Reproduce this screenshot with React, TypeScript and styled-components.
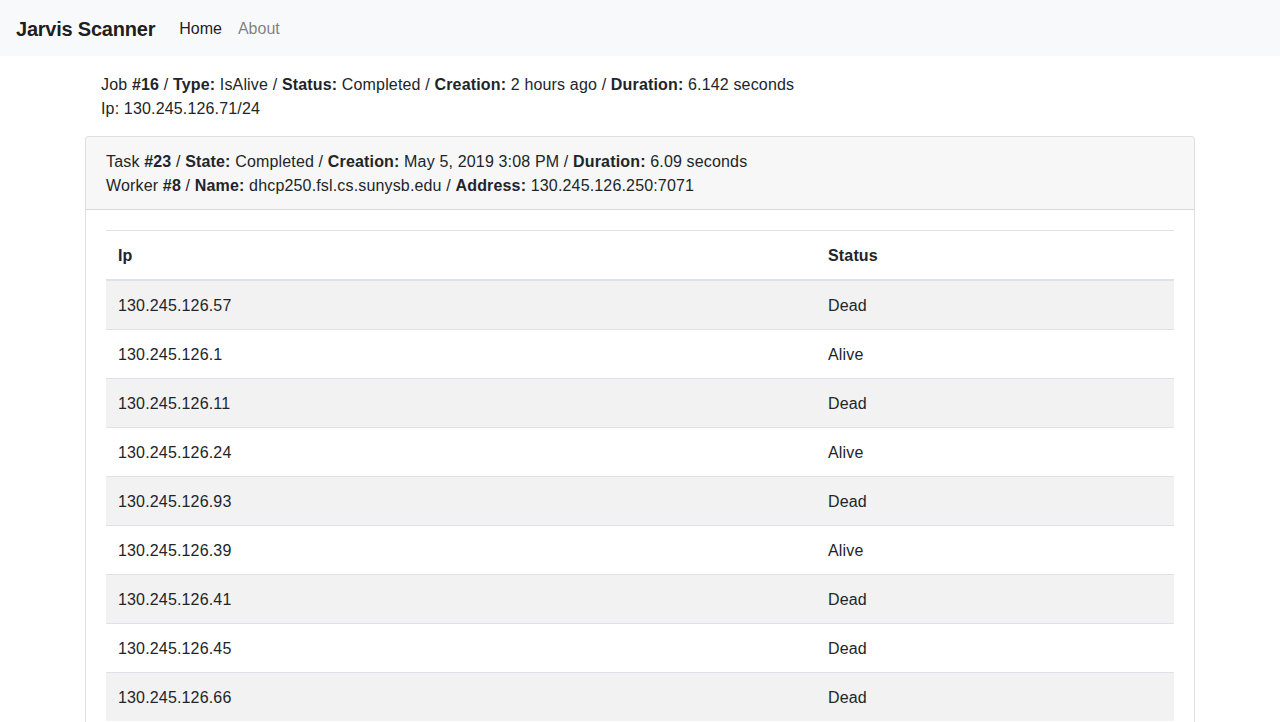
import React from "react";
import styled, { createGlobalStyle } from "styled-components";

const Global = createGlobalStyle`
  html, body { margin: 0; padding: 0; background: #fff; }
  body {
    font-family: "Liberation Sans", Arial, Helvetica, sans-serif;
    font-size: 16px;
    line-height: 1.5;
    color: #212529;
    letter-spacing: 0.16px;
  }
  * { box-sizing: border-box; }
`;

const Navbar = styled.nav`
  height: 56px;
  background: #f8f9fa;
  display: flex;
  align-items: center;
  padding: 9px 16px 7px;
`;

const Brand = styled.a`
  font-size: 20px;
  line-height: 30px;
  font-weight: 700;
  color: rgba(0, 0, 0, 0.9);
  margin-right: 16px;
  text-decoration: none;
  letter-spacing: -0.22px;
`;

const NavLink = styled.a<{ $active?: boolean }>`
  padding: 8px;
  color: ${(p) => (p.$active ? "rgba(0,0,0,0.9)" : "rgba(0,0,0,0.5)")};
  text-decoration: none;
  letter-spacing: 0;
`;

const Container = styled.div`
  max-width: 1140px;
  margin: 0 auto;
  padding: 0 15px;
`;

const JobInfo = styled.div`
  padding: 17px 16px 15px;
`;

const Line = styled.div``;

const Card = styled.div`
  border: 1px solid rgba(0, 0, 0, 0.125);
  border-radius: 4px;
  background: #fff;
`;

const CardHeader = styled.div`
  padding: 13px 20px 11px;
  background: rgba(0, 0, 0, 0.03);
  border-bottom: 1px solid rgba(0, 0, 0, 0.125);
  border-radius: 3px 3px 0 0;
`;

const CardBody = styled.div`
  padding: 20px;
`;

const Table = styled.table`
  width: 100%;
  border-collapse: collapse;
  color: #212529;
`;

const Th = styled.th<{ $w?: string }>`
  text-align: left;
  font-weight: 700;
  padding: 13px 12px 11px;
  border-top: 1px solid #dee2e6;
  border-bottom: 2px solid #dee2e6;
  width: ${(p) => p.$w || "auto"};
`;

const Tr = styled.tr<{ $striped: boolean }>`
  background: ${(p) => (p.$striped ? "rgba(0,0,0,0.05)" : "transparent")};
`;

const Td = styled.td`
  padding: 13px 12px 11px;
  border-top: 1px solid #dee2e6;
`;

const rows: [string, string][] = [
  ["130.245.126.57", "Dead"],
  ["130.245.126.1", "Alive"],
  ["130.245.126.11", "Dead"],
  ["130.245.126.24", "Alive"],
  ["130.245.126.93", "Dead"],
  ["130.245.126.39", "Alive"],
  ["130.245.126.41", "Dead"],
  ["130.245.126.45", "Dead"],
  ["130.245.126.66", "Dead"],
];

export default function App() {
  return (
    <>
      <Global />
      <Navbar>
        <Brand href="#">Jarvis Scanner</Brand>
        <NavLink $active href="#">Home</NavLink>
        <NavLink href="#">About</NavLink>
      </Navbar>
      <Container>
        <JobInfo>
          <Line>
            Job <b>#16</b> / <b>Type:</b> IsAlive / <b>Status:</b> Completed / <b>Creation:</b> 2 hours ago /{" "}
            <b>Duration:</b> 6.142 seconds
          </Line>
          <Line>Ip: 130.245.126.71/24</Line>
        </JobInfo>
        <Card>
          <CardHeader>
            <Line>
              Task <b>#23</b> / <b>State:</b> Completed / <b>Creation:</b> May 5, 2019 3:08 PM / <b>Duration:</b> 6.09
              seconds
            </Line>
            <Line>
              Worker <b>#8</b> / <b>Name:</b> dhcp250.fsl.cs.sunysb.edu / <b>Address:</b> 130.245.126.250:7071
            </Line>
          </CardHeader>
          <CardBody>
            <Table>
              <thead>
                <tr>
                  <Th $w="710px">Ip</Th>
                  <Th>Status</Th>
                </tr>
              </thead>
              <tbody>
                {rows.map(([ip, st], i) => (
                  <Tr key={ip} $striped={i % 2 === 0}>
                    <Td>{ip}</Td>
                    <Td>{st}</Td>
                  </Tr>
                ))}
              </tbody>
            </Table>
          </CardBody>
        </Card>
      </Container>
    </>
  );
}
